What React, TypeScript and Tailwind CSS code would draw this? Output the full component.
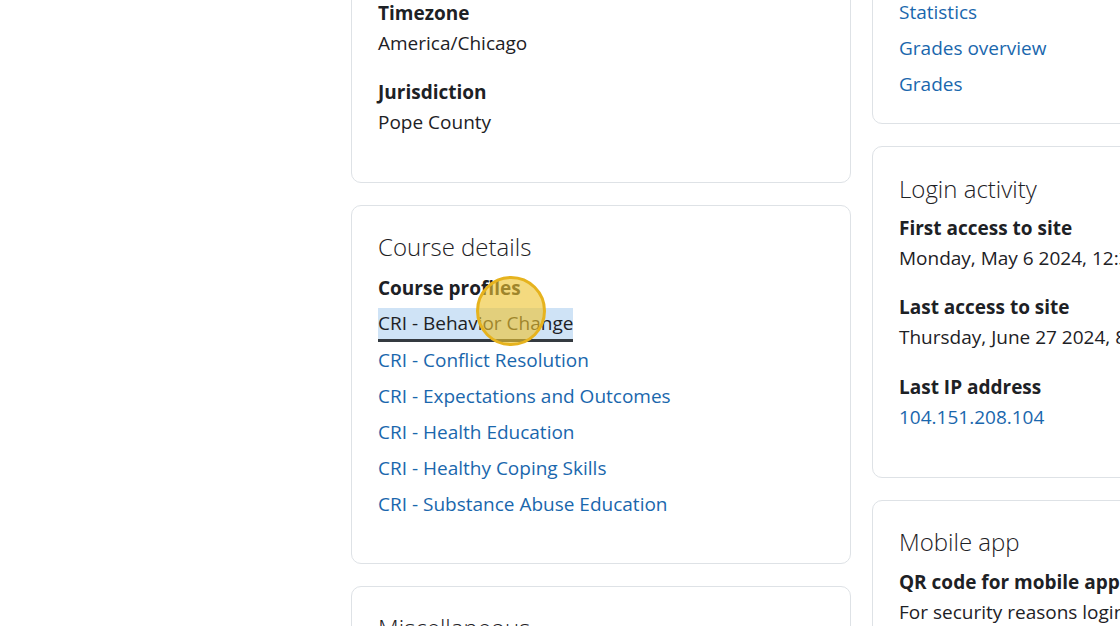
import React from 'react';

const font = { fontFamily: '"Open Sans", "Noto Sans", sans-serif' };

const courses = [
  'CRI - Conflict Resolution',
  'CRI - Expectations and Outcomes',
  'CRI - Health Education',
  'CRI - Healthy Coping Skills',
  'CRI - Substance Abuse Education',
];

function Card({ className = '', children }: { className?: string; children: React.ReactNode }) {
  return (
    <section className={`border border-[#dee2e6] rounded-[10px] bg-white px-[26px] ${className}`}>
      {children}
    </section>
  );
}

export default function App() {
  return (
    <div
      className="h-[626px] w-[1120px] overflow-hidden bg-white text-[19px] leading-[30px] text-[#1d2125]"
      style={font}
    >
      <div className="flex items-start gap-[21px] pl-[351px] -mt-[60px]">
        {/* Left column */}
        <div className="w-[500px] shrink-0 flex flex-col gap-[22px]">
          <Card className="pt-[57px] pb-[45px]">
            <dl>
              <dt className="font-bold">Timezone</dt>
              <dd className="mb-[19px]">America/Chicago</dd>
              <dt className="font-bold">Jurisdiction</dt>
              <dd>Pope County</dd>
            </dl>
          </Card>

          <Card className="pt-[26px] pb-[41px]">
            <h3 className="text-[24px] font-light leading-[30px] mb-[11px]">Course details</h3>
            <dl>
              <dt className="font-bold">Course profiles</dt>
              <dd className="mt-[2px]">
                <ul>
                  <li className="leading-[36px] relative">
                    <span className="relative inline-block leading-[31px] bg-[#cfe3f6] border-b-[3px] border-[#343a40]">
                      CRI - Behavior Change
                    </span>
                    <span className="absolute left-[98px] top-[-29px] w-[70px] h-[70px] rounded-full bg-[rgba(238,196,48,0.62)] border-[3px] border-[#e6b31e]" />
                  </li>
                  {courses.map((c) => (
                    <li key={c} className="leading-[36px]">
                      <a className="text-[#1a67ad]">{c}</a>
                    </li>
                  ))}
                </ul>
              </dd>
            </dl>
          </Card>

          <Card className="pt-[26px] pb-[40px]">
            <h3 className="text-[24px] font-light leading-[30px]">Miscellaneous</h3>
          </Card>
        </div>

        {/* Right column */}
        <div className="w-[400px] shrink-0 flex flex-col gap-[22px] -mt-[19px]">
          <Card className="pt-[36px] pb-[21px]">
            <ul>
              {['Reports', 'Statistics', 'Grades overview', 'Grades'].map((l) => (
                <li key={l} className="leading-[36px]">
                  <a className="text-[#1a67ad]">{l}</a>
                </li>
              ))}
            </ul>
          </Card>

          <Card className="pt-[27px] pb-[45px]">
            <h3 className="text-[24px] font-light leading-[30px] mb-[9px]">Login activity</h3>
            <dl className="whitespace-nowrap">
              <dt className="font-bold">First access to site</dt>
              <dd className="mb-[19px]">Monday, May 6 2024, 12:32 PM (51 days 5 hours)</dd>
              <dt className="font-bold">Last access to site</dt>
              <dd className="mb-[20px]">Thursday, June 27 2024, 8:14 AM (now)</dd>
              <dt className="font-bold">Last IP address</dt>
              <dd>
                <a className="text-[#1a67ad]">104.151.208.104</a>
              </dd>
            </dl>
          </Card>

          <Card className="pt-[26px] pb-[40px]">
            <h3 className="text-[24px] font-light leading-[30px] mb-[10px]">Mobile app</h3>
            <dl className="whitespace-nowrap">
              <dt className="font-bold">QR code for mobile app access</dt>
              <dd>For security reasons login via QR code is disabled.</dd>
            </dl>
          </Card>
        </div>
      </div>
    </div>
  );
}
